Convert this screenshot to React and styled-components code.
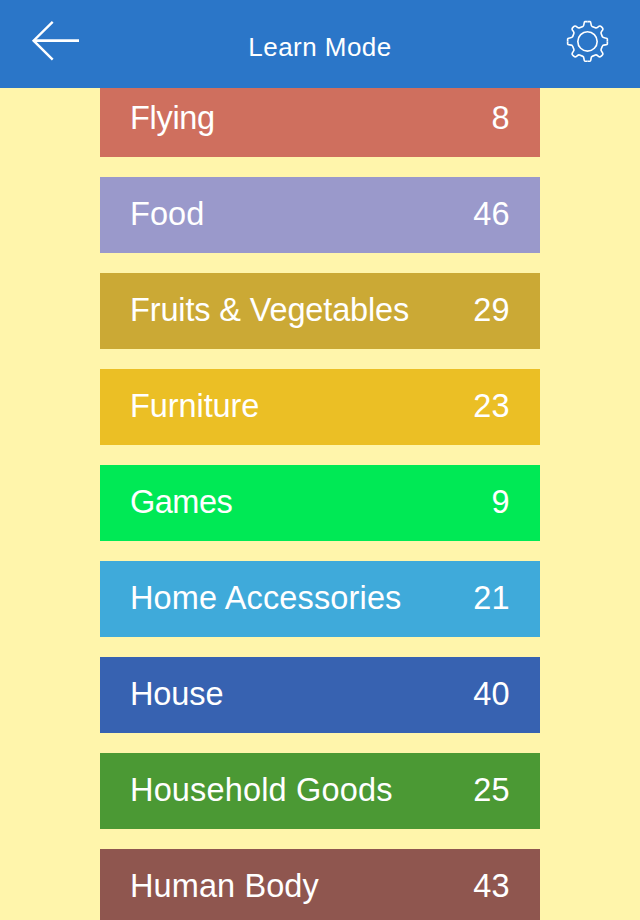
import styled, { createGlobalStyle } from "styled-components";

const categories = [
  { name: "Flying", count: 8, color: "#cf6f5e", spacing: -0.3 },
  { name: "Food", count: 46, color: "#9a99cb", spacing: 0.05 },
  { name: "Fruits & Vegetables", count: 29, color: "#cba935", spacing: -0.14 },
  { name: "Furniture", count: 23, color: "#ebbf25", spacing: -0.08 },
  { name: "Games", count: 9, color: "#00e955", spacing: -0.5 },
  { name: "Home Accessories", count: 21, color: "#3faada", spacing: 0.15 },
  { name: "House", count: 40, color: "#3762b1", spacing: -0.1 },
  { name: "Household Goods", count: 25, color: "#4b9934", spacing: 0.16 },
  { name: "Human Body", count: 43, color: "#8f564f", spacing: 0.1 },
];

const gearQuarter =
  "M0-60.5H8C12-60 9-47 14-45.5Q19-43.5 24-41.5C30-39 32-47 38-47Q40-47 43.5-43.5Q47-40 47-38C47-32 39-30 41.5-24Q43.5-19 45.5-14C47-9 60-12 60.5-8V0";

const App = () => {
  return (
    <Screen>
      <GlobalStyle />
      <Header>
        <IconButton aria-label="Back">
          <svg width="48" height="42" viewBox="0 0 48 42">
            <path d="M20.7 1.8L1.6 20.7L20.7 39.6" strokeWidth="2.4" />
            <path d="M2 20.7H47" strokeWidth="2.8" />
          </svg>
        </IconButton>
        <Title>Learn Mode</Title>
        <IconButton aria-label="Settings">
          <svg width="42" height="42" viewBox="-65.5 -65.3 128 128">
            <g strokeWidth="5">
              {[0, 90, 180, 270].map((angle) => (
                <path key={angle} d={gearQuarter} transform={`rotate(${angle})`} />
              ))}
              <circle r="29.5" />
            </g>
          </svg>
        </IconButton>
      </Header>
      <List>
        {categories.map((item) => (
          <Category key={item.name} $color={item.color}>
            <Name $spacing={item.spacing}>{item.name}</Name>
            <Count>{item.count}</Count>
          </Category>
        ))}
      </List>
    </Screen>
  );
};

const GlobalStyle = createGlobalStyle`
  * {
    box-sizing: border-box;
  }

  body {
    margin: 0;
    overflow: hidden;
    font-family: "Liberation Sans", Arial, sans-serif;
    background: #fff5ab;
  }
`;

const Screen = styled.div`
  display: flex;
  flex-direction: column;
  width: 640px;
  height: 920px;
  overflow: hidden;
  background: #fff5ab;
`;

const Header = styled.header`
  display: grid;
  grid-template-columns: 48px 1fr 48px;
  align-items: start;
  flex: none;
  height: 88px;
  padding: 20px 32px 0;
  background: #2b76c8;
  color: white;
`;

const IconButton = styled.button`
  display: flex;
  justify-content: flex-end;
  padding: 0;
  border: none;
  background: none;
  cursor: pointer;

  svg {
    flex: none;
    overflow: visible;
    fill: none;
    stroke: white;
    stroke-linecap: butt;
    stroke-linejoin: miter;
  }
`;

const Title = styled.h1`
  margin: 12px 0 0;
  font-size: 26px;
  font-weight: 400;
  line-height: 30px;
  letter-spacing: 0.45px;
  text-align: center;
`;

const List = styled.main`
  display: flex;
  flex-direction: column;
  flex: 1;
  gap: 20px;
  min-height: 0;
  padding: 0 100px;
  overflow: hidden;
`;

const Category = styled.div`
  display: flex;
  align-items: center;
  justify-content: space-between;
  flex: none;
  height: 76px;
  padding: 0 30.5px 2px 30px;
  background: ${(props) => props.$color};
  color: white;
  font-size: 32.5px;
  line-height: 38px;
  white-space: nowrap;

  /* the list is scrolled a few pixels, the header cuts the first row */
  &:first-child {
    margin-top: -7px;
  }
`;

const Name = styled.span`
  letter-spacing: ${(props) => props.$spacing}px;
`;

const Count = styled.span`
  text-align: right;
`;

export default App;
